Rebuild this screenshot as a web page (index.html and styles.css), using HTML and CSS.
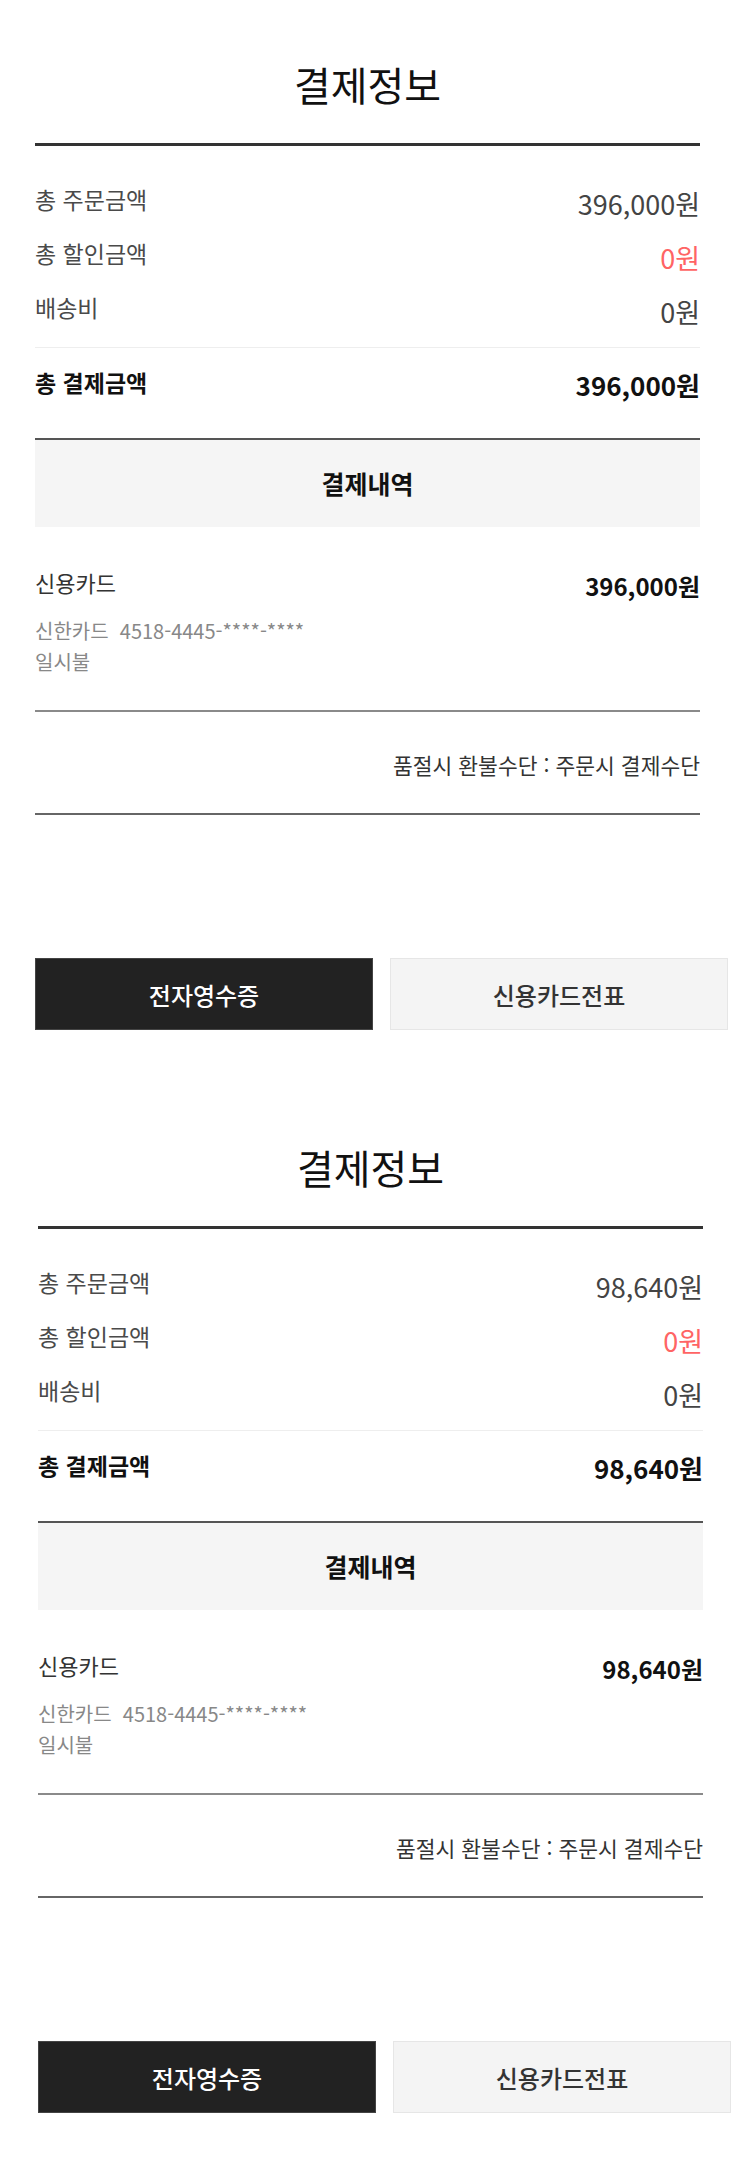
FILE: index.html
```html
<!DOCTYPE html>
<html lang="ko">
<head>
	<meta charset="UTF-8">
	<title>결제정보</title>
	<link rel="stylesheet" href="styles.css">
</head>
<body>
	<div class="pay">
		<h2 class="pay-title">결제정보</h2>
		<div class="pay-sum">
			<div class="pay-row"><span class="pay-label">총 주문금액</span><span class="pay-val">396,000원</span></div>
			<div class="pay-row"><span class="pay-label">총 할인금액</span><span class="pay-val red">0원</span></div>
			<div class="pay-row"><span class="pay-label">배송비</span><span class="pay-val">0원</span></div>
		</div>
		<div class="pay-row pay-total"><span class="pay-label">총 결제금액</span><span class="pay-val">396,000원</span></div>
		<div class="pay-detail">
			<h3 class="detail-title">결제내역</h3>
			<div class="detail-body">
				<div class="detail-row"><span class="detail-name">신용카드</span><span class="detail-val">396,000원</span></div>
				<p class="detail-info">신한카드&nbsp;&nbsp;4518-4445-****-****<br>일시불</p>
			</div>
		</div>
		<p class="pay-refund">품절시 환불수단 : 주문시 결제수단</p>
		<div class="pay-btns">
			<a class="btn btn-dark">전자영수증</a>
			<a class="btn btn-light">신용카드전표</a>
		</div>
	</div>

	<div class="pay pay-second">
		<h2 class="pay-title">결제정보</h2>
		<div class="pay-sum">
			<div class="pay-row"><span class="pay-label">총 주문금액</span><span class="pay-val">98,640원</span></div>
			<div class="pay-row"><span class="pay-label">총 할인금액</span><span class="pay-val red">0원</span></div>
			<div class="pay-row"><span class="pay-label">배송비</span><span class="pay-val">0원</span></div>
		</div>
		<div class="pay-row pay-total"><span class="pay-label">총 결제금액</span><span class="pay-val">98,640원</span></div>
		<div class="pay-detail">
			<h3 class="detail-title">결제내역</h3>
			<div class="detail-body">
				<div class="detail-row"><span class="detail-name">신용카드</span><span class="detail-val">98,640원</span></div>
				<p class="detail-info">신한카드&nbsp;&nbsp;4518-4445-****-****<br>일시불</p>
			</div>
		</div>
		<p class="pay-refund">품절시 환불수단 : 주문시 결제수단</p>
		<div class="pay-btns">
			<a class="btn btn-dark">전자영수증</a>
			<a class="btn btn-light">신용카드전표</a>
		</div>
	</div>
</body>
</html>
```

FILE: styles.css
```css
*{
	margin: 0;
	padding: 0;
	box-sizing: border-box;
}
body{
	background-color: #FFF;
	font-family: "Noto Sans CJK KR", "Noto Sans", sans-serif;
	color: #333;
}
.pay{
	width: 665px;
	margin-left: 35px;
	padding-top: 58px;
	padding-bottom: 53px;
}
.pay-second{
	margin-left: 38px;
}
.pay-title{
	font-size: 40px;
	font-weight: 400;
	line-height: 52px;
	text-align: center;
	color: #111;
	margin-bottom: 33px;
}
.pay-sum{
	border-top: 3px solid #333;
	border-bottom: 1px solid #eee;
	padding: 26px 0 13px;
}
.pay-row{
	display: flex;
	justify-content: space-between;
	align-items: center;
	height: 54px;
}
.pay-label{
	font-size: 23px;
	color: #4a4a4a;
}
.pay-val{
	font-size: 27px;
	color: #444;
	margin-top: 8px;
}
.pay-val.red{
	color: #ff6464;
}
.pay-total{
	height: 90px;
	padding: 7px 0 29px;
}
.pay-total .pay-label,.pay-total .pay-val{
	font-weight: 700;
	color: #111;
}
.pay-total .pay-val{
	font-size: 26px;
	margin-top: 4px;
}
.pay-detail{
	border-top: 2px solid #555;
	border-bottom: 2px solid #8a8a8a;
}
.detail-title{
	background-color: #f5f5f5;
	font-size: 25px;
	font-weight: 700;
	line-height: 87px;
	text-align: center;
	color: #111;
}
.detail-body{
	padding: 35px 0 33px;
}
.detail-row{
	display: flex;
	justify-content: space-between;
	align-items: center;
	height: 40px;
	margin-bottom: 13px;
}
.detail-name{
	font-size: 22px;
	color: #333;
}
.detail-val{
	font-size: 24px;
	font-weight: 700;
	color: #111;
	margin-top: 6px;
}
.detail-info{
	font-size: 20px;
	line-height: 31px;
	color: #888;
}
.pay-refund{
	font-size: 21.5px;
	line-height: 40px;
	text-align: right;
	color: #333;
	margin-top: 33px;
	padding-bottom: 28px;
	border-bottom: 2px solid #666;
}
.pay-btns{
	width: 693px;
	display: flex;
	gap: 17px;
	margin-top: 143px;
}
.btn{
	flex: 1;
	height: 72px;
	display: flex;
	align-items: center;
	justify-content: center;
	font-size: 24px;
	font-weight: 500;
	cursor: pointer;
}
.btn-dark{
	background-color: #222;
	border: 1px solid #444;
	color: #FFF;
}
.btn-light{
	background-color: #f4f4f4;
	border: 1px solid #e6e6e6;
	color: #333;
}
```
